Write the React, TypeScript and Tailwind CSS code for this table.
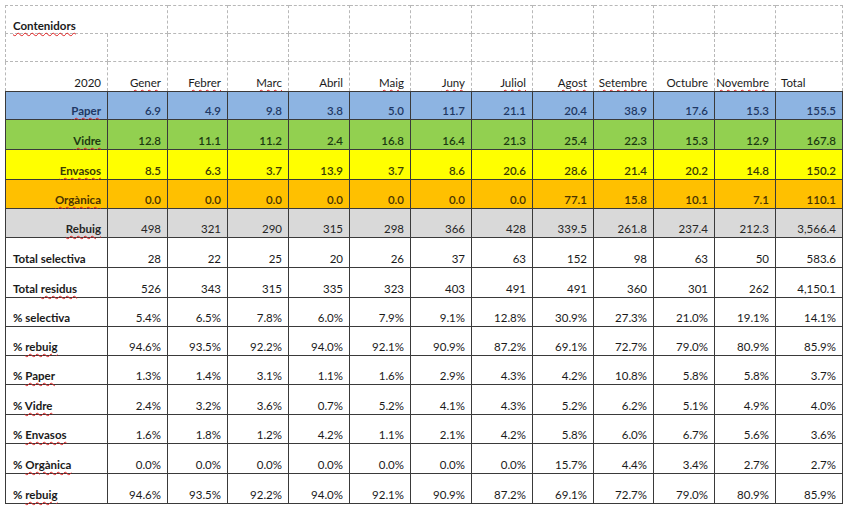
import React from "react";

const months = [
  { name: "Gener", spell: true },
  { name: "Febrer", spell: true },
  { name: "Marc", spell: true },
  { name: "Abril", spell: false },
  { name: "Maig", spell: true },
  { name: "Juny", spell: true },
  { name: "Juliol", spell: true },
  { name: "Agost", spell: true },
  { name: "Setembre", spell: true },
  { name: "Octubre", spell: false },
  { name: "Novembre", spell: true },
];

type Row = {
  prefix?: string;
  label: string;
  spell: boolean;
  values: string[];
  tone?: string;
  height: string;
  centerLabel?: boolean;
};

const rows: Row[] = [
  {
    label: "Paper",
    spell: true,
    values: ["6.9", "4.9", "9.8", "3.8", "5.0", "11.7", "21.1", "20.4", "38.9", "17.6", "15.3", "155.5"],
    tone: "bg-[#8db4e2] text-[#1f3864]",
    height: "h-[29px]",
    centerLabel: true,
  },
  {
    label: "Vidre",
    spell: true,
    values: ["12.8", "11.1", "11.2", "2.4", "16.8", "16.4", "21.3", "25.4", "22.3", "15.3", "12.9", "167.8"],
    tone: "bg-[#92d050] text-[#1c3a10]",
    height: "h-[30px]",
    centerLabel: true,
  },
  {
    label: "Envasos",
    spell: true,
    values: ["8.5", "6.3", "3.7", "13.9", "3.7", "8.6", "20.6", "28.6", "21.4", "20.2", "14.8", "150.2"],
    tone: "bg-[#ffff00] text-[#3b3b05]",
    height: "h-[30px]",
    centerLabel: true,
  },
  {
    label: "Orgànica",
    spell: true,
    values: ["0.0", "0.0", "0.0", "0.0", "0.0", "0.0", "0.0", "77.1", "15.8", "10.1", "7.1", "110.1"],
    tone: "bg-[#ffc000] text-[#4a3300]",
    height: "h-[29px]",
    centerLabel: true,
  },
  {
    label: "Rebuig",
    spell: true,
    values: ["498", "321", "290", "315", "298", "366", "428", "339.5", "261.8", "237.4", "212.3", "3,566.4"],
    tone: "bg-[#d9d9d9] text-[#262626]",
    height: "h-[29px]",
    centerLabel: true,
  },
  {
    prefix: "Total selectiva",
    label: "",
    spell: false,
    values: ["28", "22", "25", "20", "26", "37", "63", "152", "98", "63", "50", "583.6"],
    height: "h-[30px]",
  },
  {
    prefix: "Total ",
    label: "residus",
    spell: true,
    values: ["526", "343", "315", "335", "323", "403", "491", "491", "360", "301", "262", "4,150.1"],
    height: "h-[30px]",
  },
  {
    prefix: "% selectiva",
    label: "",
    spell: false,
    values: ["5.4%", "6.5%", "7.8%", "6.0%", "7.9%", "9.1%", "12.8%", "30.9%", "27.3%", "21.0%", "19.1%", "14.1%"],
    height: "h-[29px]",
  },
  {
    prefix: "% ",
    label: "rebuig",
    spell: true,
    values: ["94.6%", "93.5%", "92.2%", "94.0%", "92.1%", "90.9%", "87.2%", "69.1%", "72.7%", "79.0%", "80.9%", "85.9%"],
    height: "h-[29px]",
  },
  {
    prefix: "% ",
    label: "Paper",
    spell: true,
    values: ["1.3%", "1.4%", "3.1%", "1.1%", "1.6%", "2.9%", "4.3%", "4.2%", "10.8%", "5.8%", "5.8%", "3.7%"],
    height: "h-[29px]",
  },
  {
    prefix: "% ",
    label: "Vidre",
    spell: true,
    values: ["2.4%", "3.2%", "3.6%", "0.7%", "5.2%", "4.1%", "4.3%", "5.2%", "6.2%", "5.1%", "4.9%", "4.0%"],
    height: "h-[30px]",
  },
  {
    prefix: "% ",
    label: "Envasos",
    spell: true,
    values: ["1.6%", "1.8%", "1.2%", "4.2%", "1.1%", "2.1%", "4.2%", "5.8%", "6.0%", "6.7%", "5.6%", "3.6%"],
    height: "h-[29px]",
  },
  {
    prefix: "% ",
    label: "Orgànica",
    spell: true,
    values: ["0.0%", "0.0%", "0.0%", "0.0%", "0.0%", "0.0%", "0.0%", "15.7%", "4.4%", "3.4%", "2.7%", "2.7%"],
    height: "h-[30px]",
  },
  {
    prefix: "% ",
    label: "rebuig",
    spell: true,
    values: ["94.6%", "93.5%", "92.2%", "94.0%", "92.1%", "90.9%", "87.2%", "69.1%", "72.7%", "79.0%", "80.9%", "85.9%"],
    height: "h-[30px]",
  },
];

const cols =
  "grid grid-cols-[103px_60px_60px_61px_61px_61px_61px_61px_61px_60px_61px_61px_67px]";

function Spell({ children }: { children: React.ReactNode }) {
  return (
    <span className="underline decoration-wavy decoration-[#e02020] decoration-1 underline-offset-[2px]">
      {children}
    </span>
  );
}

export default function App() {
  return (
    <div className="h-[508px] w-[850px] bg-white pl-[5px] pt-[5px] font-['Lato','Liberation_Sans',sans-serif] text-[11.5px] leading-none text-[#1a1a1a]">
      <div className={cols}>
        {/* row 1 */}
        <div className="col-span-2 flex h-[29px] items-end border-l border-t border-r border-b border-dashed border-[#b8b8b8] pb-[2px] pl-[7px] font-bold">
          <Spell>Contenidors</Spell>
        </div>
        {Array.from({ length: 11 }).map((_, i) => (
          <div key={i} className="h-[29px] border-t border-r border-b border-dashed border-[#b8b8b8]" />
        ))}
        {/* row 2 */}
        {Array.from({ length: 13 }).map((_, i) => (
          <div
            key={i}
            className={`h-[28px] border-r border-b border-dashed border-[#b8b8b8] ${i === 0 ? "border-l" : ""}`}
          />
        ))}
        {/* header */}
        <div className="flex h-[29px] items-end justify-end border-l border-r border-dashed border-[#b8b8b8] pb-[3px] pr-[6px]">
          2020
        </div>
        {months.map((m) => (
          <div
            key={m.name}
            className="flex h-[29px] items-end justify-end border-r border-dashed border-[#b8b8b8] pb-[3px] pr-[6px]"
          >
            {m.spell ? <Spell>{m.name}</Spell> : m.name}
          </div>
        ))}
        <div className="flex h-[29px] items-end border-r border-dashed border-[#b8b8b8] pb-[3px] pl-[5px]">
          Total
        </div>

        {/* data */}
        {rows.map((r, ri) => (
          <React.Fragment key={ri}>
            <div
              className={`flex ${r.height} items-end border-l border-r border-b border-[#3a3a3a] pb-[3px] ${
                ri === 0 ? "border-t" : ""
              } ${r.centerLabel ? "justify-end pr-[6px]" : "pl-[7px]"} ${r.tone ?? ""} font-bold`}
            >
              <span>
                {r.prefix}
                {r.label && (r.spell ? <Spell>{r.label}</Spell> : r.label)}
              </span>
            </div>
            {r.values.map((v, vi) => (
              <div
                key={vi}
                className={`flex ${r.height} items-end justify-end border-r border-b border-[#3a3a3a] pb-[3px] pr-[6px] ${
                  ri === 0 ? "border-t" : ""
                } ${r.tone ?? ""} ${ri < 4 ? "font-semibold" : ""}`}
              >
                {v}
              </div>
            ))}
          </React.Fragment>
        ))}
      </div>
    </div>
  );
}
